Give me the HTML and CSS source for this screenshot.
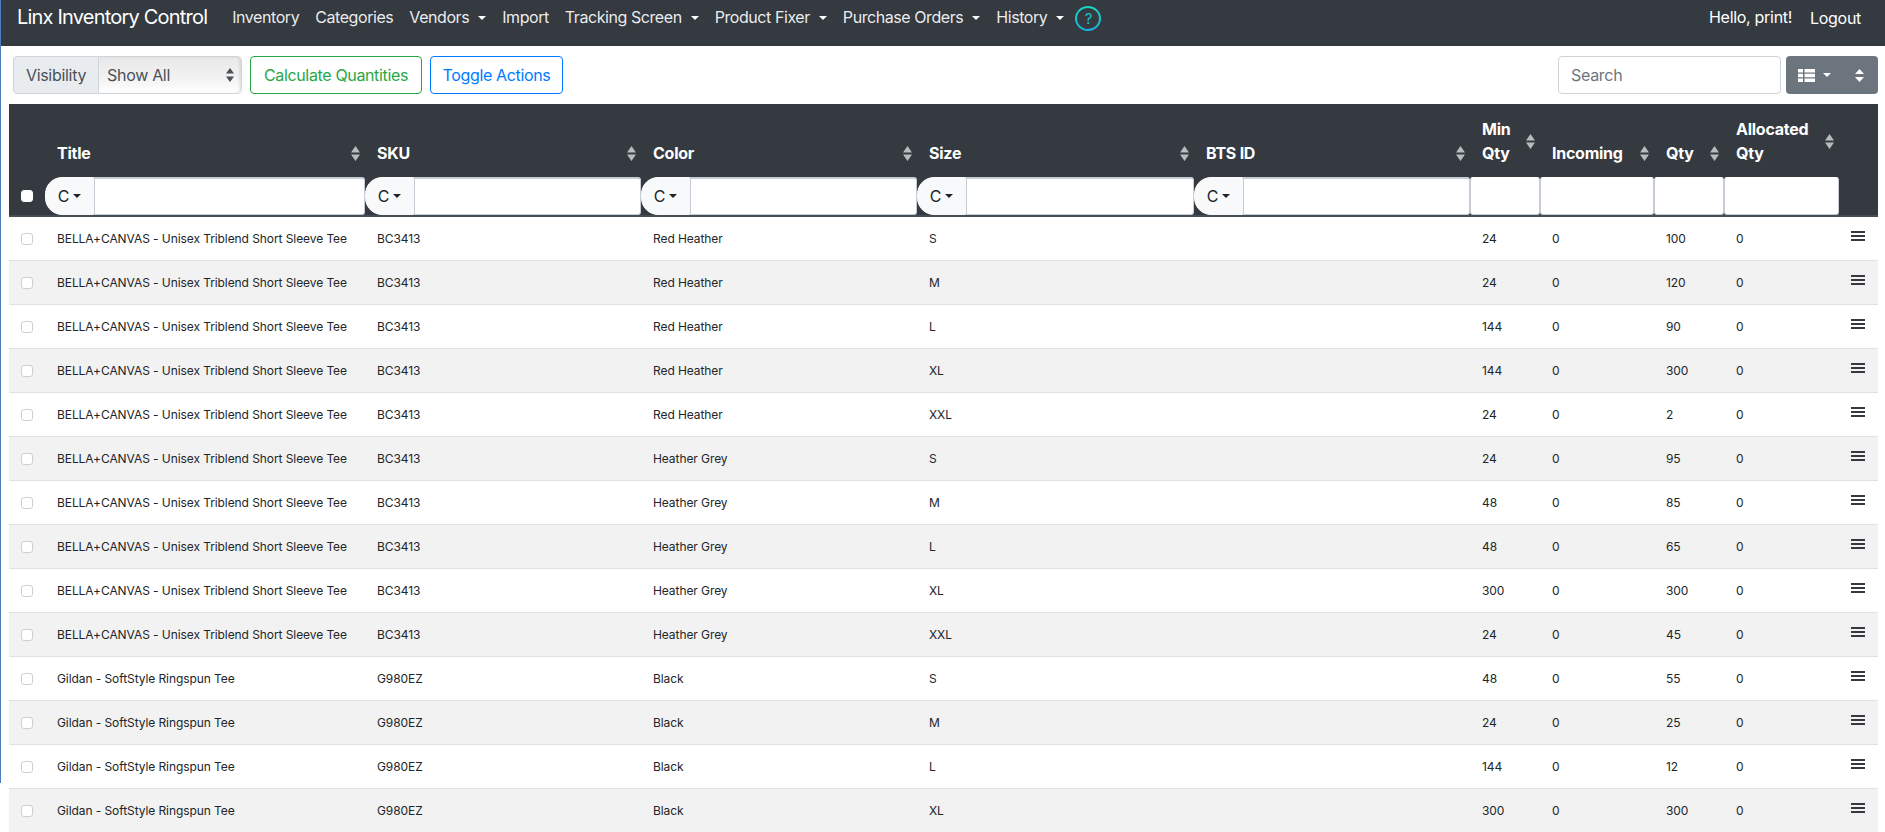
FILE: index.html
```html
<!DOCTYPE html>
<html lang="en">
<head>
    <meta charset="UTF-8">
    <title>Linx Inventory Control</title>
    <link rel="stylesheet" href="styles.css">
</head>
<body>

<div class="edge-line"></div>

<div class="navbar">
    <a class="brand" href="#">Linx Inventory Control</a>
    <div class="nav-links">
        <a href="#">Inventory</a>
        <a href="#">Categories</a>
        <a href="#" class="dropdown">Vendors</a>
        <a href="#">Import</a>
        <a href="#" class="dropdown">Tracking Screen</a>
        <a href="#" class="dropdown">Product Fixer</a>
        <a href="#" class="dropdown">Purchase Orders</a>
        <a href="#" class="dropdown">History</a>
        <span class="help">?</span>
    </div>
    <div class="nav-user">
        <span class="hello">Hello, print!</span>
        <a href="#" class="logout">Logout</a>
    </div>
</div>

<div class="toolbar">
    <div class="visibility">
        <span class="vis-label">Visibility</span>
        <div class="vis-select">
            <span>Show All</span>
            <svg class="updown" viewBox="0 0 8 14" width="8" height="14"><path d="M4 0 8 5.500H0zM4 14 0 8.500h8z"/></svg>
        </div>
    </div>
    <button class="btn btn-green">Calculate Quantities</button>
    <button class="btn btn-blue">Toggle Actions</button>
    <div class="spacer"></div>
    <input class="search" type="text" placeholder="Search">
    <div class="columns-btn">
        <svg viewBox="0 0 17 13" width="17" height="13"><path d="M0 0h5v3.500H0zM6.500 0H17v3.500H6.500zM0 4.750h5v3.500H0zM6.500 4.750H17v3.500H6.500zM0 9.500h5V13H0zM6.500 9.500H17V13H6.500z"/></svg>
        <span class="caret"></span>
        <svg class="btn-sort" viewBox="0 0 9 13" width="9" height="13"><path d="M4.500 0 9 5H0zM4.500 13 0 8h9z"/></svg>
    </div>
</div>

<div class="table-wrap">
    <table class="inventory">
        <colgroup>
            <col class="c-check"><col class="c-title"><col class="c-wide"><col class="c-wide"><col class="c-size"><col class="c-wide">
            <col class="c-num"><col class="c-inc"><col class="c-num"><col class="c-alloc"><col class="c-act">
        </colgroup>
        <thead id="head"></thead>
        <tbody id="rows"></tbody>
    </table>
</div>

<script src="table.js"></script>
</body>
</html>
```

FILE: styles.css
```css
* {
    box-sizing: border-box;
}
html, body {
    height: 100%;
}
body {
    margin: 0;
    font-family: Inter, "Liberation Sans", sans-serif;
    font-size: 16px;
    color: #212529;
    background-color: #fff;
    overflow: hidden;
}
.edge-line {
    position: absolute;
    left: 0;
    top: 0;
    width: 1px;
    height: 783px;
    background-color: #4a7ebd;
}

/* navbar */
.navbar {
    background-color: #343a40;
    height: 46px;
    padding: 0 17px 12px;
    display: flex;
    align-items: center;
}
.navbar a {
    color: #fff;
    text-decoration: none;
}
.brand {
    font-size: 20px;
    letter-spacing: -0.8px;
    margin-right: 17px;
}
.nav-links {
    display: flex;
    align-items: center;
    font-size: 16px;
    letter-spacing: -0.43px;
}
.nav-links a {
    padding: 0 8px;
    color: rgba(255, 255, 255, 0.92);
}
.dropdown::after {
    content: "";
    display: inline-block;
    margin-left: 9px;
    vertical-align: 3px;
    border-top: 4.800px solid #fff;
    border-left: 4.800px solid transparent;
    border-right: 4.800px solid transparent;
}
.help {
    width: 26px;
    height: 25px;
    margin-left: 3px;
    position: relative;
    top: 1px;
    border: 2px solid transparent;
    border-radius: 50%;
    background: linear-gradient(#343a40, #343a40) padding-box, linear-gradient(#1bd6bd, #14b6e4) border-box;
    color: #16c5d3;
    display: flex;
    align-items: center;
    justify-content: center;
    font-size: 15px;
}
.nav-user {
    margin-left: auto;
    display: flex;
    align-items: center;
    letter-spacing: -0.3px;
    padding-right: 7px;
}
.hello {
    color: #fff;
    margin-right: 18px;
}
.logout {
    position: relative;
    top: 1px;
}

/* toolbar */
.toolbar {
    display: flex;
    align-items: stretch;
    height: 38px;
    margin: 10px 7px 10px 13px;
    letter-spacing: -0.3px;
}
.visibility {
    display: flex;
    width: 229px;
    color: #495057;
    margin-right: 8px;
}
.vis-label {
    width: 86px;
    display: flex;
    align-items: center;
    justify-content: center;
    background-color: #e9ecef;
    border: 1px solid #ced4da;
    border-radius: 4px 0 0 4px;
}
.vis-select {
    flex: 1;
    display: flex;
    align-items: center;
    justify-content: space-between;
    padding: 0 7px 0 8px;
    background: linear-gradient(#e8e8e8, #f1f1f1 55%, #fff);
    box-shadow: inset -2px 0 2px rgba(0, 0, 0, 0.08);
    border: 1px solid #ced4da;
    border-left: 0;
    border-radius: 0 5px 5px 0;
}
.updown {
    fill: #495057;
}
.btn {
    font: inherit;
    letter-spacing: -0.35px;
    background-color: #fff;
    border-radius: 4px;
    padding: 0;
    margin-right: 8px;
    border: 1px solid;
}
.btn-green {
    width: 172px;
    color: #28a745;
    border-color: #28a745;
}
.btn-blue {
    width: 133px;
    color: #007bff;
    border-color: #007bff;
}
.spacer {
    flex: 1;
}
.search {
    font: inherit;
    letter-spacing: -0.3px;
    width: 223px;
    padding: 0 12px;
    border: 1px solid #ced4da;
    border-radius: 4px;
    margin-right: 5px;
}
.search::placeholder {
    color: #6c757d;
}
.columns-btn {
    width: 92px;
    background-color: #6c757d;
    border-radius: 4px;
    display: flex;
    align-items: center;
    padding: 0 14px 0 12px;
    fill: #fff;
}
.caret {
    margin-left: 8px;
    border-top: 4.800px solid #fff;
    border-left: 4.800px solid transparent;
    border-right: 4.800px solid transparent;
}
.btn-sort {
    margin-left: auto;
}

/* table */
.table-wrap {
    margin: 0 7px 0 9px;
}
.inventory {
    width: 100%;
    table-layout: fixed;
    border-collapse: separate;
    border-spacing: 0;
    font-size: 12px;
    letter-spacing: -0.08px;
}
.c-check { width: 36px; }
.c-title { width: 320px; }
.c-wide { width: 276px; }
.c-size { width: 277px; }
.c-num { width: 70px; }
.c-inc { width: 114px; }
.c-alloc { width: 115px; }
.c-act { width: 39px; }
.inventory thead th {
    background-color: #343a40;
    color: #fff;
    height: 113px;
    padding: 0;
    vertical-align: bottom;
    text-align: left;
    font-size: 16px;
    letter-spacing: -0.25px;
    line-height: 24px;
    border-bottom: 2px solid #454d55;
}
.th-inner {
    display: flex;
    align-items: center;
    justify-content: space-between;
    padding: 0 5px 12px 12px;
}
.sort {
    flex: none;
    fill: #b9bcbf;
}
.filter {
    display: flex;
    height: 38px;
    align-items: stretch;
}
.filter-check {
    align-items: center;
    justify-content: center;
}
.filter-btn {
    width: 49px;
    flex: none;
    display: flex;
    align-items: center;
    justify-content: center;
    background-color: #f8f9fa;
    color: #212529;
    font-weight: 400;
    font-size: 16px;
    border-radius: 17px 0 0 17px;
    border: 1px solid #f8f9fa;
}
.filter-btn::after {
    content: "";
    margin-left: 4px;
    border-top: 4px solid #212529;
    border-left: 4px solid transparent;
    border-right: 4px solid transparent;
}
.filter input[type="text"] {
    flex: 1;
    min-width: 0;
    border: 1px solid #c5ccd5;
    border-top-width: 2px;
    border-radius: 0 3px 3px 0;
    background-color: #fff;
    padding: 0;
}
.filter input.plain[type="text"] {
    border-top: 1px solid #fff;
    border-radius: 3px;
}
.row-check {
    appearance: none;
    display: block;
    width: 12px;
    height: 12px;
    margin: 0 auto;
    border: 1px solid #cfcfcf;
    border-radius: 3px;
    background-color: #fff;
}
.head-check {
    border-color: #fff;
}
.inventory tbody td {
    height: 44px;
    padding: 0 12px;
    border-top: 1px solid #dee2e6;
    white-space: nowrap;
    vertical-align: middle;
}
.inventory tbody tr:first-child td {
    height: 43px;
    border-top: 0;
}
.inventory tbody tr:nth-child(even) td {
    background-color: #f2f2f2;
}
.inventory tbody td.check-cell {
    padding: 0;
}
.inventory tbody td.menu-cell {
    padding: 0 13px 5px 12px;
}
.menu-icon {
    display: block;
    fill: #343a40;
}
```

FILE: table.js
```js
var columns = [
    { label: 'Title', filter: true },
    { label: 'SKU', filter: true },
    { label: 'Color', filter: true },
    { label: 'Size', filter: true },
    { label: 'BTS ID', filter: true },
    { label: 'Min<br>Qty' },
    { label: 'Incoming' },
    { label: 'Qty' },
    { label: 'Allocated<br>Qty' }
];

var bella = 'BELLA+CANVAS - Unisex Triblend Short Sleeve Tee';
var gildan = 'Gildan - SoftStyle Ringspun Tee';
var data = [
    [bella, 'BC3413', 'Red Heather', 'S', 24, 100],
    [bella, 'BC3413', 'Red Heather', 'M', 24, 120],
    [bella, 'BC3413', 'Red Heather', 'L', 144, 90],
    [bella, 'BC3413', 'Red Heather', 'XL', 144, 300],
    [bella, 'BC3413', 'Red Heather', 'XXL', 24, 2],
    [bella, 'BC3413', 'Heather Grey', 'S', 24, 95],
    [bella, 'BC3413', 'Heather Grey', 'M', 48, 85],
    [bella, 'BC3413', 'Heather Grey', 'L', 48, 65],
    [bella, 'BC3413', 'Heather Grey', 'XL', 300, 300],
    [bella, 'BC3413', 'Heather Grey', 'XXL', 24, 45],
    [gildan, 'G980EZ', 'Black', 'S', 48, 55],
    [gildan, 'G980EZ', 'Black', 'M', 24, 25],
    [gildan, 'G980EZ', 'Black', 'L', 144, 12],
    [gildan, 'G980EZ', 'Black', 'XL', 300, 300]
];

var sortIcon = '<svg class="sort" viewBox="0 0 9 15" width="9" height="15"><path d="M4.500 0 9 6.500H0zM4.500 15 0 8.500h9z"/></svg>';
var menuIcon = '<svg class="menu-icon" viewBox="0 0 14 10" width="14" height="10"><path d="M0 0h14v2H0zM0 4h14v2H0zM0 8h14v2H0z"/></svg>';

var head = '<tr><th><div class="filter filter-check"><input type="checkbox" class="row-check head-check"></div></th>';
columns.forEach(function (col) {
    head += '<th><div class="th-inner"><span>' + col.label + '</span>' + sortIcon + '</div><div class="filter">';
    if (col.filter) {
        head += '<span class="filter-btn">C</span><input type="text">';
    } else {
        head += '<input type="text" class="plain">';
    }
    head += '</div></th>';
});
head += '<th></th></tr>';
document.getElementById('head').innerHTML = head;

var rows = '';
data.forEach(function (r) {
    rows += '<tr><td class="check-cell"><input type="checkbox" class="row-check"></td>'
        + '<td>' + r[0] + '</td><td>' + r[1] + '</td><td>' + r[2] + '</td><td>' + r[3] + '</td><td></td>'
        + '<td>' + r[4] + '</td><td>0</td><td>' + r[5] + '</td><td>0</td>'
        + '<td class="menu-cell">' + menuIcon + '</td></tr>';
});
document.getElementById('rows').innerHTML = rows;
```
